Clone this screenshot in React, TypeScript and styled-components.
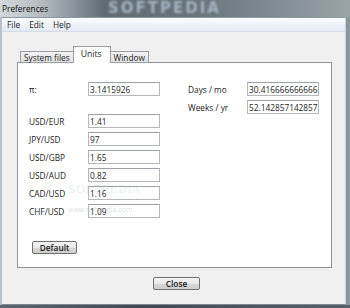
import React from "react";
import styled, { createGlobalStyle } from "styled-components";

const GlobalStyle = createGlobalStyle`
  html, body {
    margin: 0;
    padding: 0;
    background: #4b575d;
    font-family: "Open Sans", "Noto Sans", sans-serif;
    font-size: 8.3px;
    color: #1b1b1b;
  }
`;

//Outer frame (window chrome)
const Frame = styled.div`
  position: relative;
  width: 350px;
  height: 308px;
  overflow: hidden;
  display: flex;
  flex-direction: column;
  background: linear-gradient(90deg, #b8c2ca 0%, #9aa6ae 50%, #8a979d 100%);
`;

const TitleBar = styled.div`
  position: relative;
  height: 17px;
  display: flex;
  align-items: center;
  padding-left: 2px;
  background: linear-gradient(
    90deg,
    #d4d8db 0%,
    #b4bcc1 12%,
    #5f6c73 30%,
    #66737a 55%,
    #7f8c93 78%,
    #9aa4a9 100%
  );
  overflow: hidden;
`;

const Title = styled.span`
  position: relative;
  z-index: 1;
  font-size: 8.3px;
  color: #111;
`;

const Watermark = styled.span`
  position: absolute;
  left: 108px;
  top: 0;
  font-family: "DejaVu Sans", sans-serif;
  font-weight: bold;
  font-size: 15px;
  line-height: 16px;
  letter-spacing: 2px;
  color: #a3b3c2;
  filter: blur(0.8px);
`;

const Window = styled.div`
  margin: 0 4px 0 2px;
  height: 286px;
  display: flex;
  flex-direction: column;
  background: #f0f0f0;
  border-top: 1px solid #8e9aa3;
  border-bottom: 1px solid #7d878d;
  border-right: 1px solid #c9cfd3;
`;

const MenuBar = styled.div`
  height: 13px;
  display: flex;
  align-items: center;
  padding-left: 3px;
  background: linear-gradient(#fbfcfe, #e3e9f4);
  border-bottom: 1px solid #d6dce6;
`;

const MenuItem = styled.span`
  padding: 0 2px;
  margin-right: 5px;
`;

const Content = styled.div`
  flex: 1;
  display: flex;
  flex-direction: column;
  padding: 14px 14px 0 15px;
`;

const TabRow = styled.div`
  height: 17px;
  display: flex;
  align-items: flex-end;
  padding-left: 3px;
  position: relative;
  z-index: 1;
  margin-bottom: -1px;
`;

const Tab = styled.div<{ $active?: boolean }>`
  height: ${(p) => (p.$active ? "17px" : "12px")};
  padding: ${(p) => (p.$active ? "0 8px 0 7px" : "0 3px 0 3px")};
  display: flex;
  align-items: ${(p) => (p.$active ? "flex-start" : "center")};
  padding-top: ${(p) => (p.$active ? "1px" : "0")};
  box-sizing: border-box;
  border: 1px solid #9a9da2;
  border-bottom: ${(p) => (p.$active ? "1px solid #fff" : "1px solid #9a9da2")};
  background: ${(p) =>
    p.$active ? "#fff" : "linear-gradient(#f3f3f3, #e2e2e2)"};
  margin-left: ${(p) => (p.$active ? "-1px" : "0")};
  margin-right: ${(p) => (p.$active ? "-1px" : "0")};
  font-size: ${(p) => (p.$active ? "8.6px" : "8.3px")};
`;

const Panel = styled.div`
  width: 315px;
  height: 206px;
  box-sizing: border-box;
  background: #fff;
  border: 1px solid #8f9297;
  display: flex;
  flex-direction: column;
  padding: 19px 0 13px 11px;
  position: relative;
`;

const Columns = styled.div`
  display: flex;
  align-items: flex-start;
  gap: 28px;
`;

const FieldGrid = styled.div`
  display: grid;
  grid-template-columns: 59px 72px;
  row-gap: 4px;
  align-items: center;
  align-content: start;
`;

const Label = styled.span`
  font-size: 8.3px;
`;

const Field = styled.input`
  width: 72px;
  height: 14px;
  box-sizing: border-box;
  border: 1px solid #b4b7bd;
  border-top-color: #9ea1a7;
  padding: 0 0 0 1px;
  font-family: inherit;
  font-size: 8.3px;
  color: #1b1b1b;
  background: #fff;
  outline: none;
`;

const Spacer = styled.div`
  grid-column: span 2;
  height: 10px;
`;

const Button = styled.button<{ $width: number }>`
  width: ${(p) => p.$width}px;
  height: 13px;
  box-sizing: border-box;
  padding: 0;
  border: 1px solid #707070;
  border-radius: 2px;
  background: linear-gradient(#f4f4f4 0%, #e8e8e8 50%, #d7d7d7 51%, #cfcfcf 100%);
  font-family: inherit;
  font-size: 8.3px;
  font-weight: 600;
  color: #1b1b1b;
  line-height: 10px;
`;

const DefaultButton = styled(Button)`
  margin-top: auto;
  margin-left: 3px;
`;

const Footer = styled.div`
  display: flex;
  justify-content: center;
  padding: 9px 0 0 5px;
`;

const FaintMark = styled.span`
  position: absolute;
  left: 50px;
  top: 120px;
  font-family: "DejaVu Serif", serif;
  font-size: 11px;
  letter-spacing: 0.5px;
  color: rgba(180, 186, 196, 0.3);
  pointer-events: none;
`;

const FaintUrl = styled.span`
  position: absolute;
  left: 50px;
  top: 142px;
  font-size: 7px;
  color: rgba(170, 176, 186, 0.45);
  pointer-events: none;
`;

const Desktop = styled.div`
  flex: 1;
  background: linear-gradient(90deg, #5a676e, #3f4a50 40%, #56626a);
`;

const rates: [string, string][] = [
  ["USD/EUR", "1.41"],
  ["JPY/USD", "97"],
  ["USD/GBP", "1.65"],
  ["USD/AUD", "0.82"],
  ["CAD/USD", "1.16"],
  ["CHF/USD", "1.09"],
];

const App = () => {
  return (
    <>
      <GlobalStyle />
      <Frame>
        <TitleBar>
          <Watermark>SOFTPEDIA</Watermark>
          <Title>Preferences</Title>
        </TitleBar>
        <Window>
          <MenuBar>
            <MenuItem>File</MenuItem>
            <MenuItem>Edit</MenuItem>
            <MenuItem>Help</MenuItem>
          </MenuBar>
          <Content>
            <TabRow>
              <Tab>System files</Tab>
              <Tab $active>Units</Tab>
              <Tab>Window</Tab>
            </TabRow>
            <Panel>
              <Columns>
                <FieldGrid>
                  <Label>π:</Label>
                  <Field readOnly value="3.1415926" />
                  <Spacer />
                  {rates.map(([name, value]) => (
                    <React.Fragment key={name}>
                      <Label>{name}</Label>
                      <Field readOnly value={value} />
                    </React.Fragment>
                  ))}
                </FieldGrid>
                <FieldGrid>
                  <Label>Days / mo</Label>
                  <Field readOnly value="30.416666666666668" />
                  <Label>Weeks / yr</Label>
                  <Field readOnly value="52.142857142857146" />
                </FieldGrid>
              </Columns>
              <DefaultButton $width={45}>Default</DefaultButton>
              <FaintMark>SOFTPEDIA</FaintMark>
              <FaintUrl>www.softpedia.com</FaintUrl>
            </Panel>
            <Footer>
              <Button $width={47}>Close</Button>
            </Footer>
          </Content>
        </Window>
        <Desktop />
      </Frame>
    </>
  );
};

export default App;
